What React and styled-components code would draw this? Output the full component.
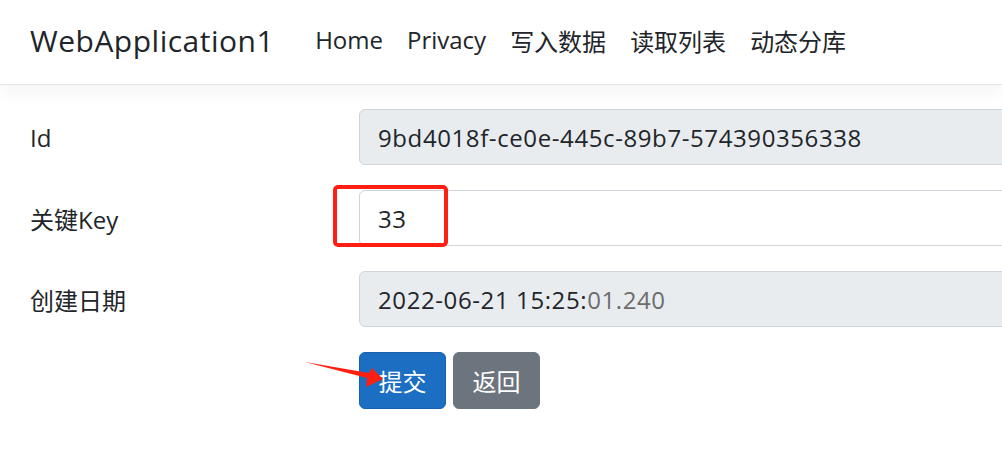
import React from "react";
import styled, { createGlobalStyle } from "styled-components";

const GlobalStyle = createGlobalStyle`
  html, body {
    margin: 0;
    padding: 0;
    background: #fff;
    overflow: hidden;
  }
  body {
    font-family: "Open Sans", "Noto Sans CJK SC", sans-serif;
    color: #212529;
  }
`;

const Page = styled.div`
  position: relative;
  width: 1002px;
  height: 463px;
  overflow: hidden;
`;

const Navbar = styled.header`
  display: flex;
  align-items: center;
  box-sizing: border-box;
  height: 85px;
  padding: 0 30px 4px;
  border-bottom: 1px solid #e2e4e8;
  box-shadow: 0 6px 18px rgba(0, 0, 0, 0.05);
  background: #fff;
`;

const Brand = styled.a`
  font-size: 30px;
  color: #212529;
  text-decoration: none;
  margin-right: 29px;
  letter-spacing: 0.5px;
`;

const NavList = styled.ul`
  display: flex;
  list-style: none;
  margin: 0;
  padding: 0;
`;

const NavLink = styled.a`
  display: block;
  padding: 0 12px;
  font-size: 24px;
  color: #212529;
  text-decoration: none;
`;

const Main = styled.main`
  padding: 24px 0 0 30px;
`;

const Row = styled.div`
  display: grid;
  grid-template-columns: 329px 700px;
  align-items: center;
  margin-bottom: 25px;
`;

const Label = styled.label`
  font-size: 24px;
`;

const Field = styled.div`
  box-sizing: border-box;
  height: 56px;
  display: flex;
  align-items: center;
  padding: 0 18px;
  font-size: 24px;
  letter-spacing: 0.6px;
  border: 1.5px solid #ced4da;
  border-radius: 6px;
  background: ${(p) => (p.$readonly ? "#e9ecef" : "#fff")};
  color: #212529;
`;

const Muted = styled.span`
  color: #6c6c6c;
`;

const Highlight = styled.div`
  position: absolute;
  left: 333px;
  top: 185px;
  width: 115px;
  height: 62px;
  box-sizing: border-box;
  border: 4px solid #ff1f12;
  border-radius: 5px;
`;

const Actions = styled.div`
  display: flex;
  gap: 7px;
  padding-left: 329px;
`;

const Button = styled.button`
  box-sizing: border-box;
  height: 57px;
  width: 87px;
  padding: 0;
  font-family: inherit;
  font-size: 24px;
  color: #fff;
  border: 1.5px solid ${(p) => (p.$variant === "primary" ? "#1861ac" : "#6c757d")};
  border-radius: 6px;
  background: ${(p) => (p.$variant === "primary" ? "#1b6ec2" : "#6c757d")};
`;

const Arrow = styled.svg`
  position: absolute;
  left: 0;
  top: 0;
  pointer-events: none;
`;

export default function App() {
  return (
    <Page>
      <GlobalStyle />
      <Navbar>
        <Brand href="/">WebApplication1</Brand>
        <NavList>
          <li><NavLink href="/">Home</NavLink></li>
          <li><NavLink href="/">Privacy</NavLink></li>
          <li><NavLink href="/">写入数据</NavLink></li>
          <li><NavLink href="/">读取列表</NavLink></li>
          <li><NavLink href="/">动态分库</NavLink></li>
        </NavList>
      </Navbar>
      <Main>
        <Row>
          <Label>Id</Label>
          <Field $readonly>9bd4018f-ce0e-445c-89b7-574390356338</Field>
        </Row>
        <Row>
          <Label>关键Key</Label>
          <Field>33</Field>
        </Row>
        <Row>
          <Label>创建日期</Label>
          <Field $readonly>
            2022-06-21 15:25:<Muted>01.240</Muted>
          </Field>
        </Row>
        <Actions>
          <Button $variant="primary">提交</Button>
          <Button>返回</Button>
        </Actions>
      </Main>
      <Highlight />
      <Arrow width="1002" height="463">
        <polygon
          points="305,362 369,373 372,368 383,379 366,387 367,378"
          fill="#ff1f12"
        />
      </Arrow>
    </Page>
  );
}
